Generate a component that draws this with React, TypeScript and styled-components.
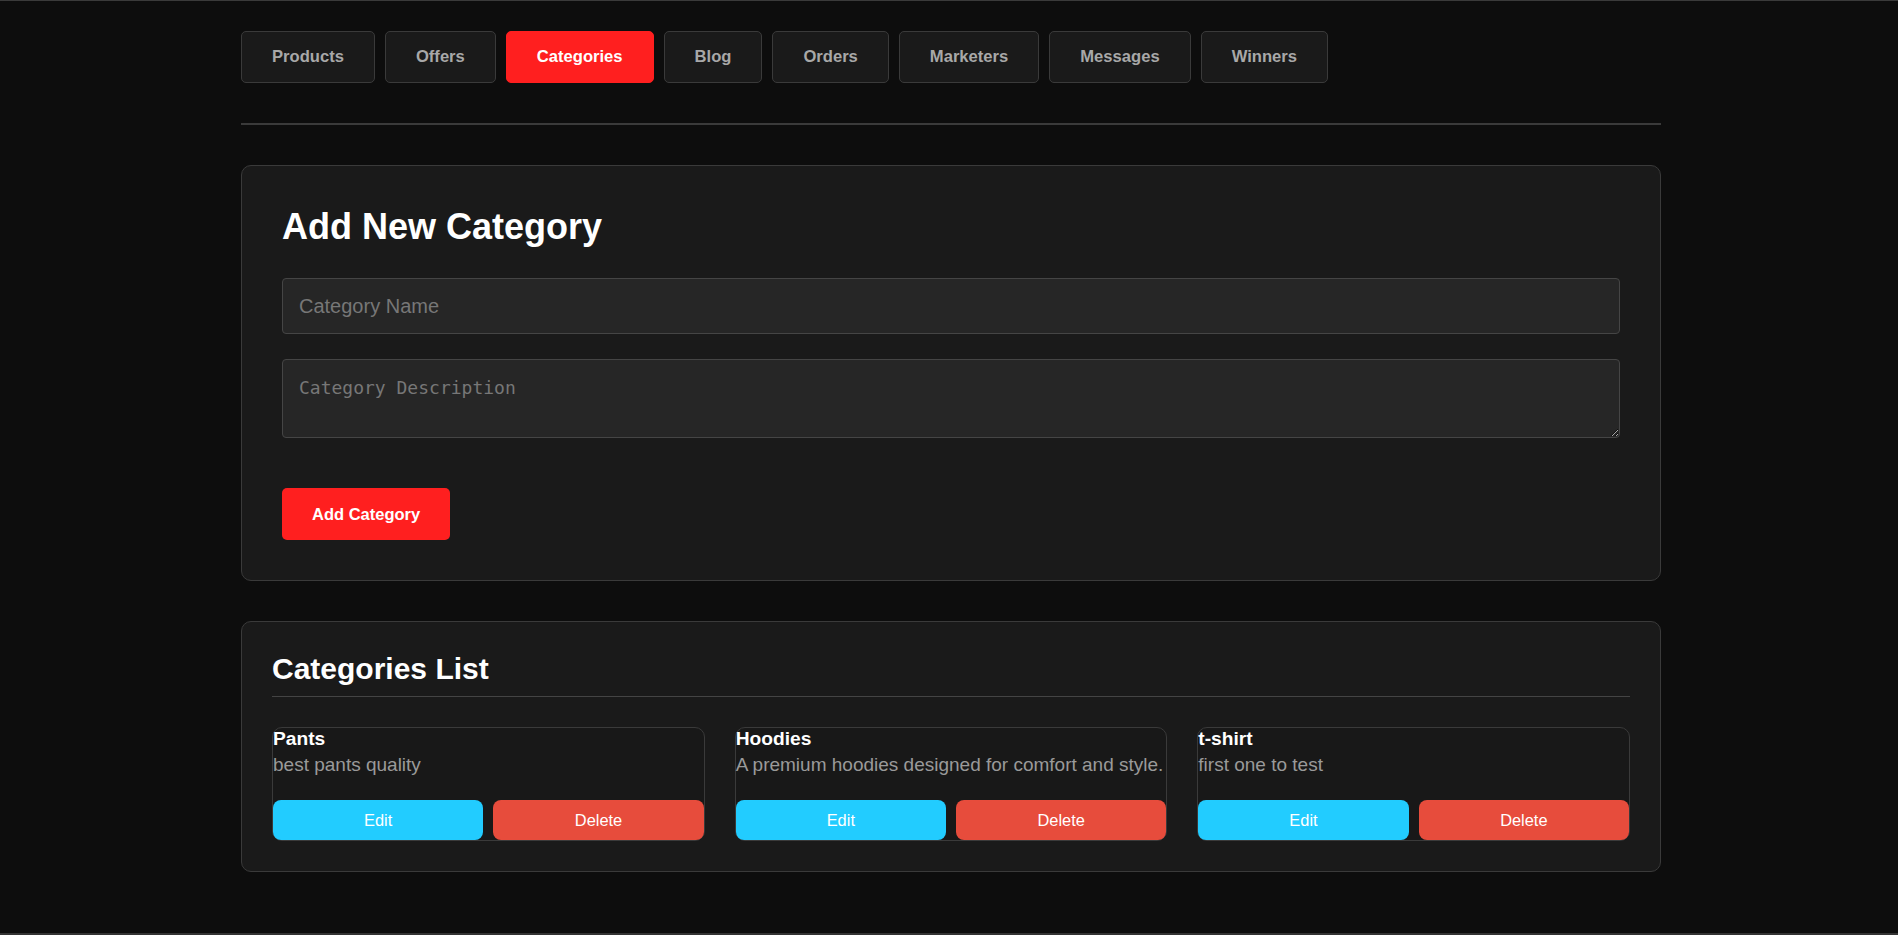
import React, { useState } from 'react'
import styled, { createGlobalStyle, css } from 'styled-components'

const GlobalStyle = createGlobalStyle`
  html, body {
    margin: 0;
    padding: 0;
    background: #0d0d0d;
    font-family: "Liberation Sans", Arial, sans-serif;
  }
  * {
    box-sizing: border-box;
  }
`

const Frame = styled.div`
  min-height: 100vh;
  padding-top: 30px;
  border-top: 1px solid #3a3a3a;
  border-bottom: 2px solid #333;
`

const Container = styled.div`
  width: 1420px;
  margin-left: calc(50% - 708px);
`

const TabBar = styled.nav`
  display: flex;
  gap: 10px;
  padding-bottom: 40px;
  margin-bottom: 40px;
  border-bottom: 2px solid #3a3a3a;
`

const TabButton = styled.button<{ $active?: boolean }>`
  height: 52px;
  padding: 0 30px;
  border-radius: 5px;
  border: 1px solid #3a3a3a;
  background: #1a1a1a;
  color: #a8a8a8;
  font-family: inherit;
  font-size: 16.6px;
  font-weight: bold;
  cursor: pointer;

  ${({ $active }) =>
    $active &&
    css`
      background: #ff1f1f;
      border-color: #ff1f1f;
      color: #fff;
    `}
`

const Panel = styled.section<{ $pad: number }>`
  background: #1a1a1a;
  border: 1px solid #3a3a3a;
  border-radius: 10px;
  padding: ${({ $pad }) => $pad}px;
  margin-bottom: 40px;
`

const FormTitle = styled.h2`
  margin: 0 0 30px;
  color: #fff;
  font-size: 36px;
  font-weight: bold;
`

const TextInput = styled.input`
  display: block;
  width: 100%;
  height: 56px;
  padding: 0 16px;
  margin-bottom: 25px;
  background: #262626;
  border: 1px solid #454545;
  border-radius: 4px;
  color: #eee;
  font-family: inherit;
  font-size: 20px;
  outline: none;

  &::placeholder {
    color: #777;
  }
`

const TextArea = styled.textarea`
  display: block;
  width: 100%;
  height: 79px;
  padding: 17px 16px 16px;
  margin-bottom: 50px;
  background: #262626;
  border: 1px solid #454545;
  border-radius: 4px;
  color: #eee;
  font-family: "DejaVu Sans Mono", "Liberation Mono", monospace;
  font-size: 18px;
  outline: none;

  &::placeholder {
    color: #777;
  }
`

const SubmitButton = styled.button`
  height: 52px;
  padding: 0 30px;
  border: none;
  border-radius: 5px;
  background: #ff1f1f;
  color: #fff;
  font-family: inherit;
  font-size: 16.5px;
  font-weight: bold;
  cursor: pointer;
`

const ListTitle = styled.h3`
  margin: 0 0 30px;
  padding-bottom: 10px;
  border-bottom: 1px solid #444;
  color: #fff;
  font-size: 30px;
  font-weight: bold;
`

const CategoryGrid = styled.div`
  display: grid;
  grid-template-columns: repeat(3, 1fr);
  gap: 30px;
`

const CategoryCard = styled.div`
  display: flex;
  flex-direction: column;
  border: 1px solid #3a3a3a;
  border-radius: 10px;
  background: #181818;
`

const CategoryName = styled.h4`
  margin: 0;
  color: #fff;
  font-size: 19.2px;
  font-weight: bold;
`

const CategoryDesc = styled.p`
  margin: 4px 0 24px;
  color: #9a9a9a;
  font-size: 19px;
`

const CardActions = styled.div`
  display: grid;
  grid-template-columns: 1fr 1fr;
  gap: 10px;
`

const ActionButton = styled.button<{ $variant: 'edit' | 'delete' }>`
  height: 40px;
  border: none;
  border-radius: 8px;
  background: ${({ $variant }) => ($variant === 'edit' ? '#22ccff' : '#e74c3c')};
  color: #fff;
  font-family: inherit;
  font-size: 16.4px;
  cursor: pointer;
`

const tabs = ['Products', 'Offers', 'Categories', 'Blog', 'Orders', 'Marketers', 'Messages', 'Winners']

type Category = { id: number; name: string; description: string }

const initialCategories: Category[] = [
  { id: 1, name: 'Pants', description: 'best pants quality' },
  { id: 2, name: 'Hoodies', description: 'A premium hoodies designed for comfort and style.' },
  { id: 3, name: 't-shirt', description: 'first one to test' },
]

export default function App() {
  const [activeTab, setActiveTab] = useState('Categories')
  const [categories, setCategories] = useState(initialCategories)
  const [name, setName] = useState('')
  const [description, setDescription] = useState('')

  const addCategory = () => {
    if (!name.trim()) return
    setCategories([...categories, { id: Date.now(), name, description }])
    setName('')
    setDescription('')
  }

  const removeCategory = (id: number) => {
    setCategories(categories.filter((c) => c.id !== id))
  }

  return (
    <Frame>
      <GlobalStyle />
      <Container>
        <TabBar>
          {tabs.map((tab) => (
            <TabButton key={tab} $active={tab === activeTab} onClick={() => setActiveTab(tab)}>
              {tab}
            </TabButton>
          ))}
        </TabBar>

        <Panel $pad={40}>
          <FormTitle>Add New Category</FormTitle>
          <TextInput
            placeholder="Category Name"
            value={name}
            onChange={(e) => setName(e.target.value)}
          />
          <TextArea
            placeholder="Category Description"
            value={description}
            onChange={(e) => setDescription(e.target.value)}
          />
          <SubmitButton onClick={addCategory}>Add Category</SubmitButton>
        </Panel>

        <Panel $pad={30}>
          <ListTitle>Categories List</ListTitle>
          <CategoryGrid>
            {categories.map((category) => (
              <CategoryCard key={category.id}>
                <CategoryName>{category.name}</CategoryName>
                <CategoryDesc>{category.description}</CategoryDesc>
                <CardActions>
                  <ActionButton $variant="edit">Edit</ActionButton>
                  <ActionButton $variant="delete" onClick={() => removeCategory(category.id)}>
                    Delete
                  </ActionButton>
                </CardActions>
              </CategoryCard>
            ))}
          </CategoryGrid>
        </Panel>
      </Container>
    </Frame>
  )
}
